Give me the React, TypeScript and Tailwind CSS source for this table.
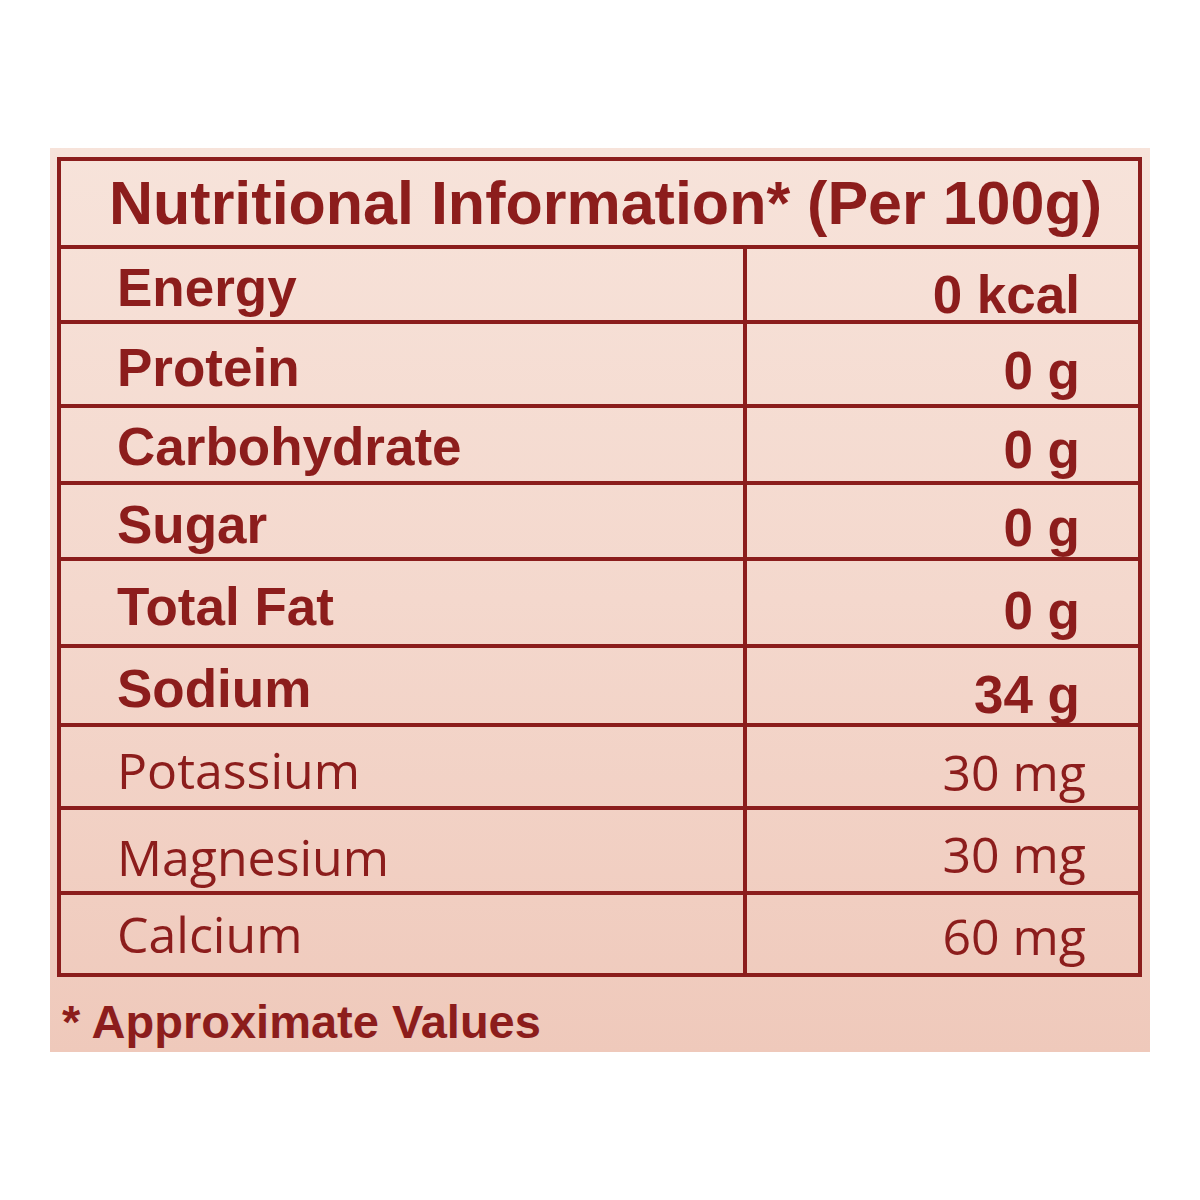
const rows = [
  { name: "Energy", value: "0 kcal", bold: true, h: "h-[71px]", lp: "pt-[12px]", vp: "pt-[19px]" },
  { name: "Protein", value: "0 g", bold: true, h: "h-[80px]", lp: "pt-[17px]", vp: "pt-[20px]" },
  { name: "Carbohydrate", value: "0 g", bold: true, h: "h-[73px]", lp: "pt-[12px]", vp: "pt-[15px]" },
  { name: "Sugar", value: "0 g", bold: true, h: "h-[72px]", lp: "pt-[13px]", vp: "pt-[16px]" },
  { name: "Total Fat", value: "0 g", bold: true, h: "h-[83px]", lp: "pt-[19px]", vp: "pt-[23px]" },
  { name: "Sodium", value: "34 g", bold: true, h: "h-[75px]", lp: "pt-[14px]", vp: "pt-[20px]" },
  { name: "Potassium", value: "30 mg", bold: false, h: "h-[79px]", lp: "pt-[18px]", vp: "pt-[20px]" },
  { name: "Magnesium", value: "30 mg", bold: false, h: "h-[81px]", lp: "pt-[22px]", vp: "pt-[19px]" },
  { name: "Calcium", value: "60 mg", bold: false, h: "h-[78px]", lp: "pt-[14px]", vp: "pt-[16px]" },
];

const arial = "font-['Liberation_Sans',Arial,sans-serif] font-bold text-[53px] leading-none";
const myriad = "font-['Open_Sans',sans-serif] font-normal text-[50px] leading-none";

const App = () => {
  return (
    <main className="w-[1200px] h-[1200px] bg-white pt-[148px] pl-[50px]">
      <div className="w-[1100px] h-[904px] bg-gradient-to-b from-[#f7e3da] via-[#f4d8cd] to-[#efc9bb] pt-[9px] px-[7px] text-[#8c1d1c]">
        <div className="border-[4px] border-[#8b1d1c] w-[1085px]">
          <div className="h-[88px] pt-[12px] pl-[48px] border-b-[4px] border-[#8b1d1c]">
            <h1 className="font-['Liberation_Sans',Arial,sans-serif] font-bold text-[61px] leading-none">
              Nutritional Information* (Per 100g)
            </h1>
          </div>
          {rows.map((r, i) => (
            <div
              key={r.name}
              className={
                "flex " +
                r.h +
                (i < rows.length - 1 ? " box-content border-b-[4px] border-[#8b1d1c]" : " box-content")
              }
            >
              <div className={"w-[682px] pl-[56px] " + r.lp}>
                <span className={r.bold ? arial : myriad}>{r.name}</span>
              </div>
              <div
                className={
                  "flex-1 border-l-[4px] border-[#8b1d1c] text-right " +
                  (r.bold ? "pr-[58px] " : "pr-[52px] ") +
                  r.vp
                }
              >
                <span className={r.bold ? arial : myriad}>{r.value}</span>
              </div>
            </div>
          ))}
        </div>
        <p className="pt-[21px] pl-[5px] font-['Liberation_Sans',Arial,sans-serif] font-bold text-[47px] leading-none">
          * Approximate Values
        </p>
      </div>
    </main>
  );
};

export default App;
